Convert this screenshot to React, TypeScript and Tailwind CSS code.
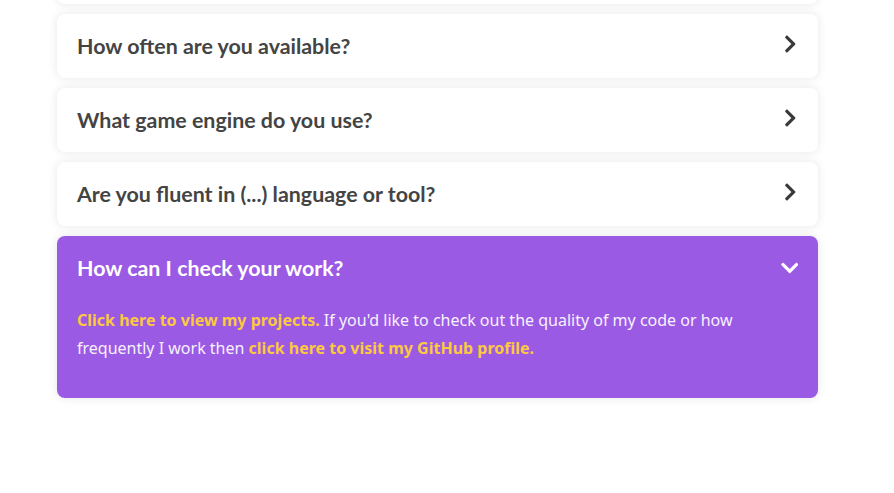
const QUESTIONS = [
  "Do you work on commission?",
  "How often are you available?",
  "What game engine do you use?",
  "Are you fluent in (...) language or tool?",
];

function ChevronRight() {
  return (
    <svg viewBox="0 0 320 512" className="h-5 w-[12.5px]" fill="currentColor" aria-hidden="true">
      <path d="M285.476 272.971L91.132 467.314c-9.373 9.373-24.569 9.373-33.941 0l-22.667-22.667c-9.357-9.357-9.375-24.522-.04-33.901L188.505 256 34.484 101.255c-9.335-9.379-9.317-24.544.04-33.901l22.667-22.667c9.373-9.373 24.569-9.373 33.941 0L285.475 239.03c9.373 9.372 9.373 24.568.001 33.941z" />
    </svg>
  );
}

function ChevronDown() {
  return (
    <svg viewBox="0 0 448 512" className="h-5 w-[17.5px]" fill="currentColor" aria-hidden="true">
      <path d="M207.029 381.476L12.686 187.132c-9.373-9.373-9.373-24.569 0-33.941l22.667-22.667c9.357-9.357 24.522-9.375 33.901-.04L224 284.505l154.745-154.021c9.379-9.335 24.544-9.317 33.901.04l22.667 22.667c9.373 9.373 9.373 24.569 0 33.941L240.971 381.476c-9.373 9.372-24.569 9.372-33.942 0z" />
    </svg>
  );
}

export default function App() {
  return (
    <main className="h-[493px] overflow-hidden bg-white">
      <div className="-mt-[60px] ml-[57px] flex w-[761px] flex-col gap-[10px]">
        {QUESTIONS.map((q) => (
          <div
            key={q}
            className="flex h-16 items-center justify-between rounded-lg bg-white px-5 text-[#444] shadow-[0_0_10px_rgba(0,0,0,0.1)]"
          >
            <h3 className="font-['Lato',sans-serif] text-[21.4px] font-bold">{q}</h3>
            <span className="mr-[2px] mb-[5px] text-[#3a3a3a]">
              <ChevronRight />
            </span>
          </div>
        ))}

        <div className="rounded-lg bg-[#9b5ae4] text-white shadow-[0_0_10px_rgba(0,0,0,0.1)]">
          <div className="flex h-16 items-center justify-between px-5">
            <h3 className="font-['Lato',sans-serif] text-[21.4px] font-bold">How can I check your work?</h3>
            <ChevronDown />
          </div>
          <p className="px-5 pt-[6px] pb-[36px] font-['Noto_Sans',sans-serif] text-base leading-7 text-[#f7f1ff]">
            <a className="font-bold text-[#fcc93f]">Click here to view my projects.</a> If you'd like to check out
            the quality of my code or how frequently I work then{" "}
            <a className="font-bold text-[#fcc93f]">click here to visit my GitHub profile.</a>
          </p>
        </div>
      </div>
    </main>
  );
}
